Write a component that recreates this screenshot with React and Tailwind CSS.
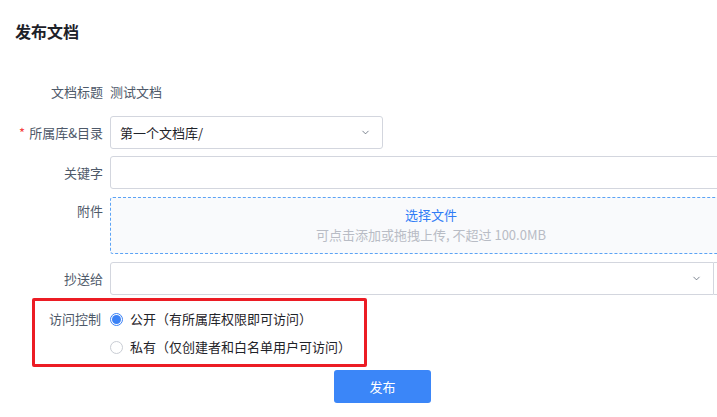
import { ChevronDown } from 'lucide-react'

const font = { fontFamily: '"Noto Sans CJK SC", "Noto Sans", sans-serif' }

function Label({ children, required }) {
  return (
    <div className="w-[95px] shrink-0 whitespace-nowrap text-right text-[13px] leading-[20px] text-[#4e5969] pr-[7px]">
      {required && <span className="text-[#f53f3f] mr-[4px]">*</span>}
      {children}
    </div>
  )
}

function Radio({ checked, children }) {
  return (
    <div className="flex items-center h-[28px] gap-[7px]">
      {checked ? (
        <span className="w-[13px] h-[13px] rounded-full border border-[#3b82f6] flex items-center justify-center">
          <span className="w-[9px] h-[9px] rounded-full bg-[#3b82f6]" />
        </span>
      ) : (
        <span className="w-[13px] h-[13px] rounded-full border border-[#c9cdd4] bg-white" />
      )}
      <span className="text-[13px] leading-[20px] text-[#1f2329] whitespace-nowrap">{children}</span>
    </div>
  )
}

export default function App() {
  return (
    <div className="w-[717px] h-[417px] overflow-hidden bg-white pl-[15px]" style={font}>
      <h1 className="pt-[19px] text-[16px] leading-[24px] font-bold text-[#1d2129]">发布文档</h1>

      {/* 文档标题 */}
      <div className="flex items-center h-[32px] mt-[33px]">
        <Label>文档标题</Label>
        <span className="text-[13px] leading-[20px] text-[#4e5969]">测试文档</span>
      </div>

      {/* 所属库&目录 */}
      <div className="flex items-center mt-[8px]">
        <Label required>所属库&amp;目录</Label>
        <div className="w-[273px] h-[33px] border border-[#d3d6de] rounded-[3px] flex items-center justify-between pl-[9px] pr-[11px]">
          <span className="text-[13px] leading-[20px] text-[#1f2329]">第一个文档库/</span>
          <ChevronDown className="w-[11px] h-[11px] text-[#4e5969]" strokeWidth={1.6} />
        </div>
      </div>

      {/* 关键字 */}
      <div className="flex items-center mt-[7px]">
        <Label>关键字</Label>
        <div className="w-[700px] shrink-0 h-[33px] border border-[#d3d6de] rounded-[3px]" />
      </div>

      {/* 附件 */}
      <div className="flex items-start mt-[8px]">
        <div className="pt-[4px]">
          <Label>附件</Label>
        </div>
        <div className="w-[700px] shrink-0 h-[57px] border border-dashed border-[#5ba3f5] rounded-[3px] bg-[#f9fafc] flex flex-col items-center pr-[58px] pt-[7px]">
          <span className="text-[13px] leading-[20px] text-[#2f7cf6]">选择文件</span>
          <span className="text-[13px] leading-[20px] text-[#b8bcc5]">可点击添加或拖拽上传, 不超过 100.0MB</span>
        </div>
      </div>

      {/* 抄送给 */}
      <div className="flex items-center mt-[8px]">
        <Label>抄送给</Label>
        <div className="w-[604px] shrink-0 h-[33px] border border-[#d3d6de] rounded-l-[3px] flex items-center justify-end pr-[11px]">
          <ChevronDown className="w-[11px] h-[11px] text-[#4e5969]" strokeWidth={1.6} />
        </div>
        <div className="w-[60px] shrink-0 h-[33px] border border-l-0 border-[#d3d6de]" />
      </div>

      {/* 访问控制 */}
      <div className="ml-[17px] mt-[3px] w-[335px] h-[69px] border-[3px] border-[#ec1c24] rounded-[2px] pt-[4px] flex">
        <div className="w-[68px] shrink-0 text-right pr-[2px] text-[13px] text-[#4e5969] h-[28px] leading-[28px] whitespace-nowrap">访问控制</div>
        <div className="pl-[7px] flex flex-col">
          <Radio checked>公开（有所属库权限即可访问）</Radio>
          <Radio>私有（仅创建者和白名单用户可访问）</Radio>
        </div>
      </div>

      <div className="mt-[3px] pl-[319px]">
        <button className="w-[97px] h-[33px] rounded-[3px] bg-[#3b86f8] text-white text-[13px] leading-[20px]">发布</button>
      </div>
    </div>
  )
}
